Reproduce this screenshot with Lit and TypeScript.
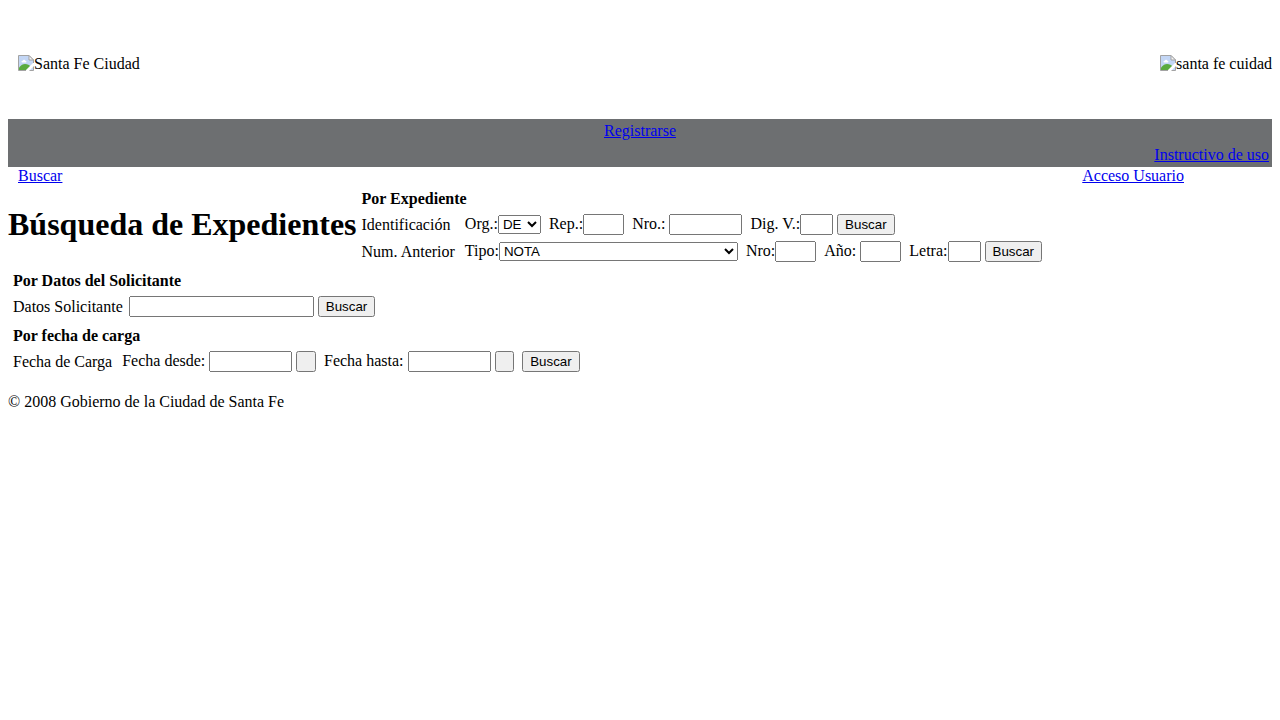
import { LitElement, html, css } from "lit";
import { customElement } from "lit/decorators.js";

const missingImage = html`<svg class="missing" viewBox="0 0 16 16" aria-hidden="true">
  <path d="M.5.5H11L15.500 5V15.500H.5Z" fill="#c3d6f5" stroke="#a3a3a3" />
  <path d="M4 7.500C3 7 3.500 5.500 4.700 5.700 5 4.300 7 4.300 7.300 5.700 8.500 5.600 8.800 7 8 7.500z" fill="#fff" />
  <path d="M1 15v-2.500C3 10 5 9 7 9c2.500 0 4.500 1 5.500 2.500L9 15z" fill="#5bab3f" />
  <path d="M11 .5V5h4.500z" fill="#f4f4f4" stroke="#a3a3a3" />
  <path d="M16 8V11L11 16H8V15L15 8z" fill="#fff" />
  <path d="M15 12.500V15H12.500z" fill="#c3d6f5" />
</svg>`;

@customElement("app-root")
export class AppRoot extends LitElement {
  static styles = css`
    :host {
      display: block;
      padding: 8px;
      color: #000;
      background: #fff;
      font-family: "Liberation Serif", "Times New Roman", serif;
      font-size: 16px;
      line-height: 18px;
    }
    a {
      color: #0000ee;
      text-decoration: underline;
    }
    .banner {
      display: flex;
      align-items: center;
      justify-content: space-between;
      min-height: 111px;
      padding-left: 10px;
      box-sizing: border-box;
    }
    .logo {
      display: flex;
      align-items: flex-start;
    }
    .missing {
      width: 16px;
      height: 16px;
    }
    .bar {
      background: #6d6f71;
    }
    .bar-row {
      padding: 3px;
      text-align: center;
    }
    .bar-row.end {
      text-align: right;
    }
    .nav {
      display: flex;
      justify-content: space-between;
      padding: 0 88px 0 10px;
    }
    .top {
      display: flex;
      align-items: flex-start;
      gap: 5px;
    }
    h1 {
      margin: 21px 0 0;
      font-size: 32px;
      line-height: 36px;
      white-space: nowrap;
    }
    h2 {
      margin: 0;
      font-size: 16px;
      line-height: 18px;
    }
    .section {
      display: flex;
      flex-direction: column;
      gap: 6px;
      padding: 5px;
    }
    .top .section {
      padding-left: 0;
    }
    .grid {
      display: grid;
      grid-template-columns: max-content max-content;
      column-gap: 10px;
      row-gap: 6px;
      align-items: center;
    }
    .grid.narrow {
      column-gap: 6px;
    }
    .fields {
      display: flex;
      align-items: baseline;
      gap: 8px;
      margin: 0;
      white-space: nowrap;
    }
    .pair {
      display: flex;
      align-items: baseline;
      gap: 4px;
    }
    .tight {
      display: flex;
      align-items: baseline;
    }
    input,
    select,
    button {
      margin: 0;
      box-sizing: border-box;
      font-family: "Liberation Sans", Arial, sans-serif;
    }
    input,
    button {
      height: 21px;
    }
    .w33 {
      width: 33px;
    }
    .w41 {
      width: 41px;
    }
    .w73 {
      width: 73px;
    }
    .w83 {
      width: 83px;
    }
    .w185 {
      width: 185px;
    }
    .org {
      width: 43px;
    }
    .tipo {
      width: 239px;
    }
    .footer {
      margin-top: 16px;
    }
  `;

  private stop(e: Event) {
    e.preventDefault();
  }

  render() {
    return html`
      <header>
        <div class="banner">
          <div class="logo">${missingImage}<span>Santa Fe Ciudad</span></div>
          <div class="logo">${missingImage}<span>santa fe cuidad</span></div>
        </div>
        <div class="bar">
          <div class="bar-row"><a href="#registro">Registrarse</a></div>
          <div class="bar-row end"><a href="#instructivo">Instructivo de uso</a></div>
        </div>
        <nav class="nav">
          <a href="#buscar">Buscar</a>
          <a href="#acceso">Acceso Usuario</a>
        </nav>
      </header>
      <main>
        <div class="top">
          <h1>Búsqueda de Expedientes</h1>
          <section class="section">
            <h2>Por Expediente</h2>
            <div class="grid">
              <span>Identificación</span>
              <form class="fields" @submit=${this.stop}>
                <div class="tight"><label for="org">Org.:</label><select id="org" class="org"><option>DE</option></select></div>
                <div class="tight"><label for="rep">Rep.:</label><input id="rep" class="w41" type="text" /></div>
                <div class="pair"><label for="nro">Nro.:</label><input id="nro" class="w73" type="text" /></div>
                <div class="pair">
                  <div class="tight"><label for="dig">Dig. V.:</label><input id="dig" class="w33" type="text" /></div>
                  <button type="submit">Buscar</button>
                </div>
              </form>
              <span>Num. Anterior</span>
              <form class="fields" @submit=${this.stop}>
                <div class="tight"><label for="tipo">Tipo:</label><select id="tipo" class="tipo"><option>NOTA</option></select></div>
                <div class="tight"><label for="nro-ant">Nro:</label><input id="nro-ant" class="w41" type="text" /></div>
                <div class="pair"><label for="anio">Año:</label><input id="anio" class="w41" type="text" /></div>
                <div class="pair">
                  <div class="tight"><label for="letra">Letra:</label><input id="letra" class="w33" type="text" /></div>
                  <button type="submit">Buscar</button>
                </div>
              </form>
            </div>
          </section>
        </div>
        <section class="section">
          <h2>Por Datos del Solicitante</h2>
          <form class="grid narrow" @submit=${this.stop}>
            <label for="datos">Datos Solicitante</label>
            <div class="pair">
              <input id="datos" class="w185" type="text" />
              <button type="submit">Buscar</button>
            </div>
          </form>
        </section>
        <section class="section">
          <h2>Por fecha de carga</h2>
          <div class="grid">
            <span>Fecha de Carga</span>
            <form class="fields" @submit=${this.stop}>
              <div class="pair">
                <label for="desde">Fecha desde:</label>
                <input id="desde" class="w83" type="text" />
                <button type="button" aria-label="Elegir fecha desde">&nbsp;</button>
              </div>
              <div class="pair">
                <label for="hasta">Fecha hasta:</label>
                <input id="hasta" class="w83" type="text" />
                <button type="button" aria-label="Elegir fecha hasta">&nbsp;</button>
              </div>
              <button type="submit">Buscar</button>
            </form>
          </div>
        </section>
      </main>
      <footer class="footer">© 2008 Gobierno de la Ciudad de Santa Fe</footer>
    `;
  }
}
